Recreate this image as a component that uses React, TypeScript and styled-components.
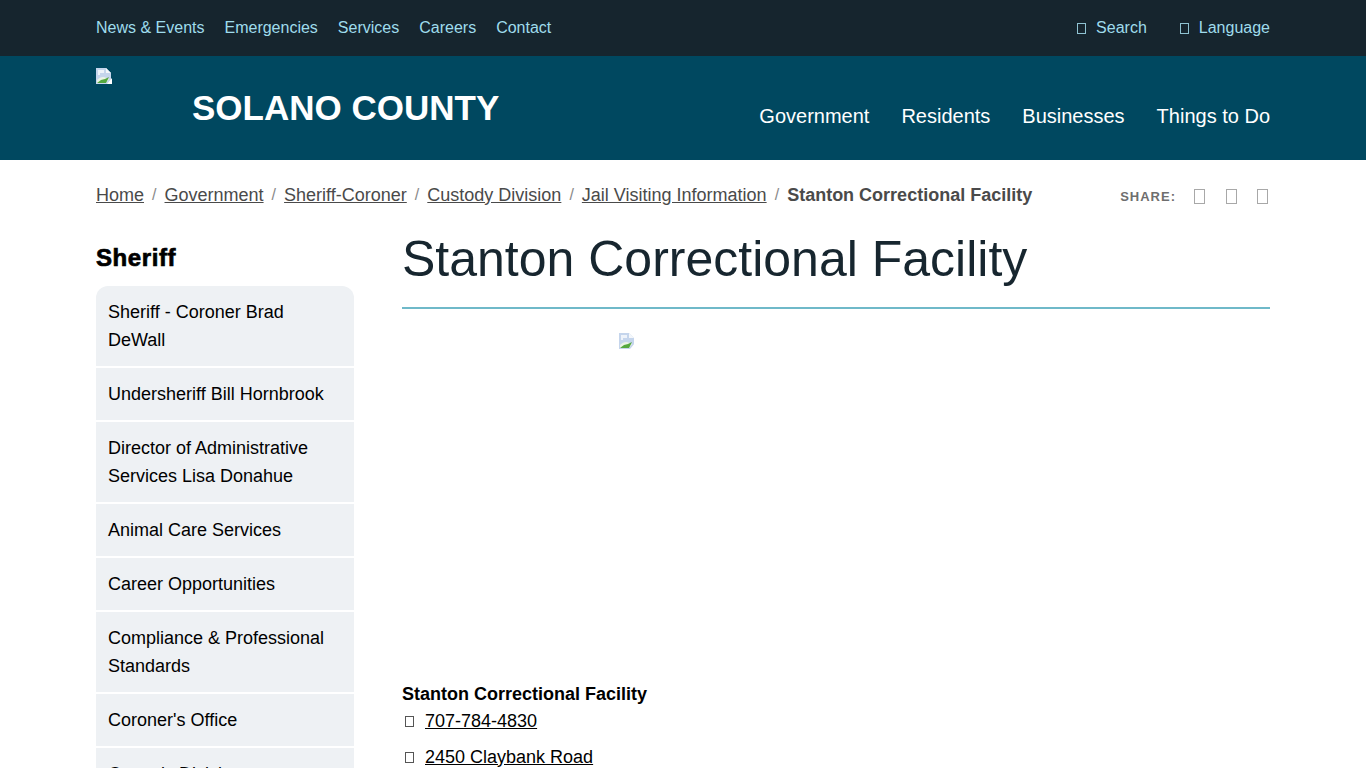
import styled, { createGlobalStyle } from 'styled-components';

const GlobalStyle = createGlobalStyle`
  html, body {
    height: 768px;
    margin: 0;
    overflow: hidden;
    background: #fff;
    font-family: "Liberation Sans", Arial, sans-serif;
    color: #000;
  }
`;

const Container = styled.div`
  width: 1174px;
  margin: 0 auto;
  display: flex;
  justify-content: space-between;
`;

const TopBar = styled.div`
  height: 56px;
  background-color: #16252e;
`;

const TopRow = styled(Container)`
  height: 56px;
  align-items: center;
`;

const TopGroup = styled.div<{ $gap: number }>`
  display: flex;
  gap: ${(p) => p.$gap}px;
`;

const TopLink = styled.a`
  display: inline-flex;
  align-items: center;
  font-size: 16px;
  line-height: 20px;
  color: #9fdcec;
  text-decoration: none;
`;

// the icon font never loaded on the original page, so icons show as empty boxes
const Tofu = styled.span<{ $w: number; $h: number; $color: string }>`
  flex: none;
  box-sizing: border-box;
  width: ${(p) => p.$w}px;
  height: ${(p) => p.$h}px;
  border: 1px solid ${(p) => p.$color};
`;

const TopIcon = styled(Tofu)`
  margin-right: 10px;
`;

const Header = styled.header`
  height: 104px;
  background-color: #004860;
`;

const HeaderRow = styled(Container)`
  height: 104px;
`;

const Brand = styled.div`
  display: flex;
  padding-top: 12px;
`;

const LogoBox = styled.div`
  width: 96px;
`;

const SiteName = styled.a`
  margin-top: 20px;
  font-size: 35px;
  line-height: 40px;
  font-weight: 700;
  color: #fff;
  text-decoration: none;
`;

const MainNav = styled.nav`
  display: flex;
  gap: 32px;
  padding-top: 48px;
`;

const MainLink = styled.a`
  font-size: 20px;
  line-height: 24px;
  color: #fff;
  text-decoration: none;
`;

const CrumbRow = styled(Container)`
  height: 70px;
  align-items: center;
  margin-bottom: 2px;
`;

const Crumbs = styled.div`
  display: flex;
  font-size: 18px;
  line-height: 24px;
  color: #4a4a4a;
`;

const CrumbItem = styled.span`
  display: flex;
`;

const Crumb = styled.a`
  color: #4a4a4a;
  text-decoration: underline;
`;

const Sep = styled.span`
  width: 20.5px;
  text-align: center;
  font-size: 16px;
  color: #8a8a8a;
`;

const Current = styled.span`
  font-weight: 700;
`;

const Share = styled.div`
  display: flex;
  align-items: center;
  padding: 2px 2px 0 0;
`;

const ShareLabel = styled.span`
  font-size: 13px;
  font-weight: 700;
  letter-spacing: 1px;
  color: #6e6e6e;
  margin-right: 18px;
`;

const ShareIcon = styled(Tofu)`
  margin-right: 20.5px;
  &:last-child {
    margin-right: 0;
  }
`;

const Body = styled(Container)`
  align-items: flex-start;
`;

const Sidebar = styled.aside`
  width: 258px;
`;

const SideTitle = styled.h3`
  margin: 0 0 14px;
  padding-top: 12px;
  font-size: 24px;
  line-height: 28px;
  font-weight: 700;
  letter-spacing: 0.6px;
  -webkit-text-stroke: 0.7px #000;
`;

const SideList = styled.ul`
  list-style: none;
  margin: 0;
  padding: 0;
  display: flex;
  flex-direction: column;
  gap: 2px;
  border-radius: 12px 12px 0 0;
  overflow: hidden;
`;

const SideItem = styled.li`
  padding: 12px;
  background-color: #eef1f4;
  font-size: 18px;
  line-height: 28px;
`;

const Main = styled.main`
  width: 868px;
`;

const Title = styled.h1`
  margin: 0;
  height: 75px;
  font-size: 50px;
  line-height: 54px;
  font-weight: 400;
  color: #17262f;
  border-bottom: 2px solid #6fb9c9;
`;

const Figure = styled.div`
  width: 434px;
  height: 349px;
  margin: 24px auto 0;
`;

const PlaceName = styled.div`
  font-size: 18px;
  line-height: 24px;
  font-weight: 700;
`;

const ContactRow = styled.div`
  display: flex;
  align-items: center;
  height: 30px;
  margin-bottom: 6px;
  font-size: 18px;
`;

const ContactIcon = styled(Tofu)`
  margin: 0 11px 0 3px;
`;

const ContactLink = styled.a`
  color: #000;
  text-decoration: underline;
`;

const BrokenIcon = styled.svg`
  display: block;
`;

function BrokenImage() {
  return (
    <BrokenIcon width="16" height="16" viewBox="0 0 16 16">
      <path d="M0 0h10l5 5v11H0z" fill="#c5d5ec" />
      <path d="M10 0l5 5h-5z" fill="#f4f7fb" />
      <path d="M2 2h6v3H4v2H2z" fill="#eef3fa" />
      <path d="M1 15v-3c2-2 4-3 6-3s4 1 6 2l-3 4z" fill="#eaf3e6" />
      <path d="M1 15l4-3 4-1 4-2-3 6z" fill="#55a83f" />
      <path d="M11 16l5-6v6z" fill="#ffffff" />
    </BrokenIcon>
  );
}

const sideItems = [
  'Sheriff - Coroner Brad DeWall',
  'Undersheriff Bill Hornbrook',
  'Director of Administrative Services Lisa Donahue',
  'Animal Care Services',
  'Career Opportunities',
  'Compliance & Professional Standards',
  "Coroner's Office",
  'Custody Division',
];

const crumbs = ['Home', 'Government', 'Sheriff-Coroner', 'Custody Division', 'Jail Visiting Information'];

export default function App() {
  return (
    <>
      <GlobalStyle />
      <TopBar>
        <TopRow>
          <TopGroup $gap={20}>
            {['News & Events', 'Emergencies', 'Services', 'Careers', 'Contact'].map((t) => (
              <TopLink key={t}>{t}</TopLink>
            ))}
          </TopGroup>
          <TopGroup $gap={33}>
            {['Search', 'Language'].map((t) => (
              <TopLink key={t}>
                <TopIcon $w={9} $h={11} $color="#8fc3d2" />
                {t}
              </TopLink>
            ))}
          </TopGroup>
        </TopRow>
      </TopBar>
      <Header>
        <HeaderRow>
          <Brand>
            <LogoBox><BrokenImage /></LogoBox>
            <SiteName>SOLANO COUNTY</SiteName>
          </Brand>
          <MainNav>
            {['Government', 'Residents', 'Businesses', 'Things to Do'].map((t) => (
              <MainLink key={t}>{t}</MainLink>
            ))}
          </MainNav>
        </HeaderRow>
      </Header>
      <CrumbRow>
        <Crumbs>
          {crumbs.map((c) => (
            <CrumbItem key={c}>
              <Crumb>{c}</Crumb>
              <Sep>/</Sep>
            </CrumbItem>
          ))}
          <Current>Stanton Correctional Facility</Current>
        </Crumbs>
        <Share>
          <ShareLabel>SHARE:</ShareLabel>
          <ShareIcon $w={11} $h={15} $color="#a8a8a8" />
          <ShareIcon $w={11} $h={15} $color="#a8a8a8" />
          <ShareIcon $w={11} $h={15} $color="#a8a8a8" />
        </Share>
      </CrumbRow>
      <Body>
        <Sidebar>
          <SideTitle>Sheriff</SideTitle>
          <SideList>
            {sideItems.map((t) => (
              <SideItem key={t}>{t}</SideItem>
            ))}
          </SideList>
        </Sidebar>
        <Main>
          <Title>Stanton Correctional Facility</Title>
          <Figure><BrokenImage /></Figure>
          <PlaceName>Stanton Correctional Facility</PlaceName>
          <ContactRow>
            <ContactIcon $w={9} $h={11} $color="#555" />
            <ContactLink>707-784-4830</ContactLink>
          </ContactRow>
          <ContactRow>
            <ContactIcon $w={9} $h={11} $color="#555" />
            <ContactLink>2450 Claybank Road</ContactLink>
          </ContactRow>
        </Main>
      </Body>
    </>
  );
}
